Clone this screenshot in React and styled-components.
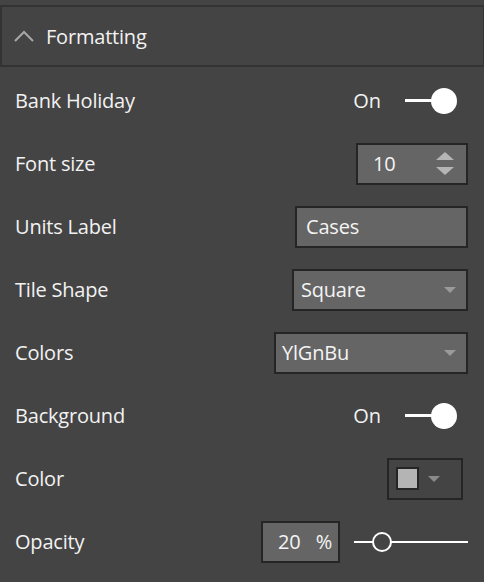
import React from "react";
import styled, { createGlobalStyle } from "styled-components";

const Global = createGlobalStyle`
  html, body { margin: 0; padding: 0; background: #444444; }
  body { font-family: "Open Sans", "Noto Sans", sans-serif; color: #f2f2f2; }
`;

const Page = styled.div`
  width: 484px;
  height: 582px;
  padding-top: 5px;
  box-sizing: border-box;
  background: #444444;
  overflow: hidden;
`;

const Header = styled.div`
  height: 62px;
  box-sizing: border-box;
  border: 2px solid #333333;
  border-right-width: 1px;
  display: flex;
  align-items: center;
  gap: 11px;
  padding-left: 11px;
  font-size: 20px;
  letter-spacing: -0.2px;
`;

const List = styled.div`
  padding-top: 2px;
  display: flex;
  flex-direction: column;
`;

const Row = styled.div`
  height: 63px;
  display: flex;
  align-items: center;
  justify-content: space-between;
  padding: 0 16px 0 15px;
  box-sizing: border-box;
`;

const Label = styled.span`
  font-size: 20px;
  letter-spacing: -0.2px;
`;

const Right = styled.div`
  display: flex;
  align-items: center;
  gap: ${(p) => p.$gap || 0}px;
  margin-right: ${(p) => p.$mr || 0}px;
`;

const ToggleText = styled.span`
  font-size: 20px;
  margin-right: 24px;
`;

const Toggle = styled.div`
  display: flex;
  align-items: center;
`;

const Track = styled.div`
  width: 28px;
  height: 3px;
  background: #ffffff;
`;

const Knob = styled.div`
  width: 26px;
  height: 26px;
  border-radius: 50%;
  background: #ffffff;
  margin-left: -2px;
`;

const Box = styled.div`
  width: ${(p) => p.$w}px;
  height: 42px;
  box-sizing: border-box;
  border: 2px solid #252525;
  background: ${(p) => (p.$dark ? "transparent" : "#656565")};
  display: flex;
  align-items: center;
  padding: 0 ${(p) => p.$pr ?? 10}px 0 ${(p) => p.$pl}px;
  font-size: 20px;
  color: #f4f4f4;
  letter-spacing: -0.2px;
`;

const Grow = styled.span`
  flex: 1;
`;

const Caret = styled.span`
  width: 0;
  height: 0;
  border-left: 6px solid transparent;
  border-right: 6px solid transparent;
  border-top: 6px solid ${(p) => p.$c || "#9a9a9a"};
`;

const Spin = styled.div`
  display: flex;
  flex-direction: column;
  gap: 7px;
`;

const Tri = styled.span`
  width: 0;
  height: 0;
  border-left: 9px solid transparent;
  border-right: 9px solid transparent;
  ${(p) => (p.$up ? "border-bottom" : "border-top")}: 8px solid #b5b5b5;
`;

const Swatch = styled.span`
  width: 23px;
  height: 23px;
  box-sizing: border-box;
  border: 2px solid #252525;
  background: #b4b4b4;
  margin-right: 9px;
`;

const Slider = styled.div`
  position: relative;
  width: 114px;
  height: 20px;
  display: flex;
  align-items: center;
`;

const Line = styled.div`
  width: 100%;
  height: 2px;
  background: #ffffff;
`;

const Thumb = styled.div`
  position: absolute;
  left: 18px;
  top: 0;
  width: 20px;
  height: 20px;
  box-sizing: border-box;
  border-radius: 50%;
  border: 2px solid #ffffff;
  background: #444444;
`;

const Chevron = () => (
  <svg width="22" height="14" viewBox="0 0 22 14">
    <polyline points="2,12 11,3 20,12" fill="none" stroke="#a8a8a8" strokeWidth="2" />
  </svg>
);

const OnToggle = () => (
  <Right $mr={11}>
    <ToggleText>On</ToggleText>
    <Toggle>
      <Track />
      <Knob />
    </Toggle>
  </Right>
);

export default function App() {
  return (
    <>
      <Global />
      <Page>
        <Header>
          <Chevron />
          <span>Formatting</span>
        </Header>
        <List>
          <Row>
            <Label>Bank Holiday</Label>
            <OnToggle />
          </Row>
          <Row>
            <Label>Font size</Label>
            <Box $w={112} $pl={15} $pr={12}>
              <Grow>10</Grow>
              <Spin>
                <Tri $up />
                <Tri />
              </Spin>
            </Box>
          </Row>
          <Row>
            <Label>Units Label</Label>
            <Box $w={173} $pl={9}>Cases</Box>
          </Row>
          <Row>
            <Label>Tile Shape</Label>
            <Box $w={176} $pl={7} $pr={10}>
              <Grow>Square</Grow>
              <Caret />
            </Box>
          </Row>
          <Row>
            <Label>Colors</Label>
            <Box $w={194} $pl={6} $pr={10}>
              <Grow>YlGnBu</Grow>
              <Caret />
            </Box>
          </Row>
          <Row>
            <Label>Background</Label>
            <OnToggle />
          </Row>
          <Row>
            <Label>Color</Label>
            <Right $mr={5}>
              <Box $w={76} $pl={7} $dark>
                <Swatch />
                <Caret $c="#8a8a8a" />
              </Box>
            </Right>
          </Row>
          <Row>
            <Label>Opacity</Label>
            <Right $gap={14}>
              <Box $w={79} $pl={15} $pr={6}>
                <Grow>20</Grow>
                <span>%</span>
              </Box>
              <Slider>
                <Line />
                <Thumb />
              </Slider>
            </Right>
          </Row>
        </List>
      </Page>
    </>
  );
}
